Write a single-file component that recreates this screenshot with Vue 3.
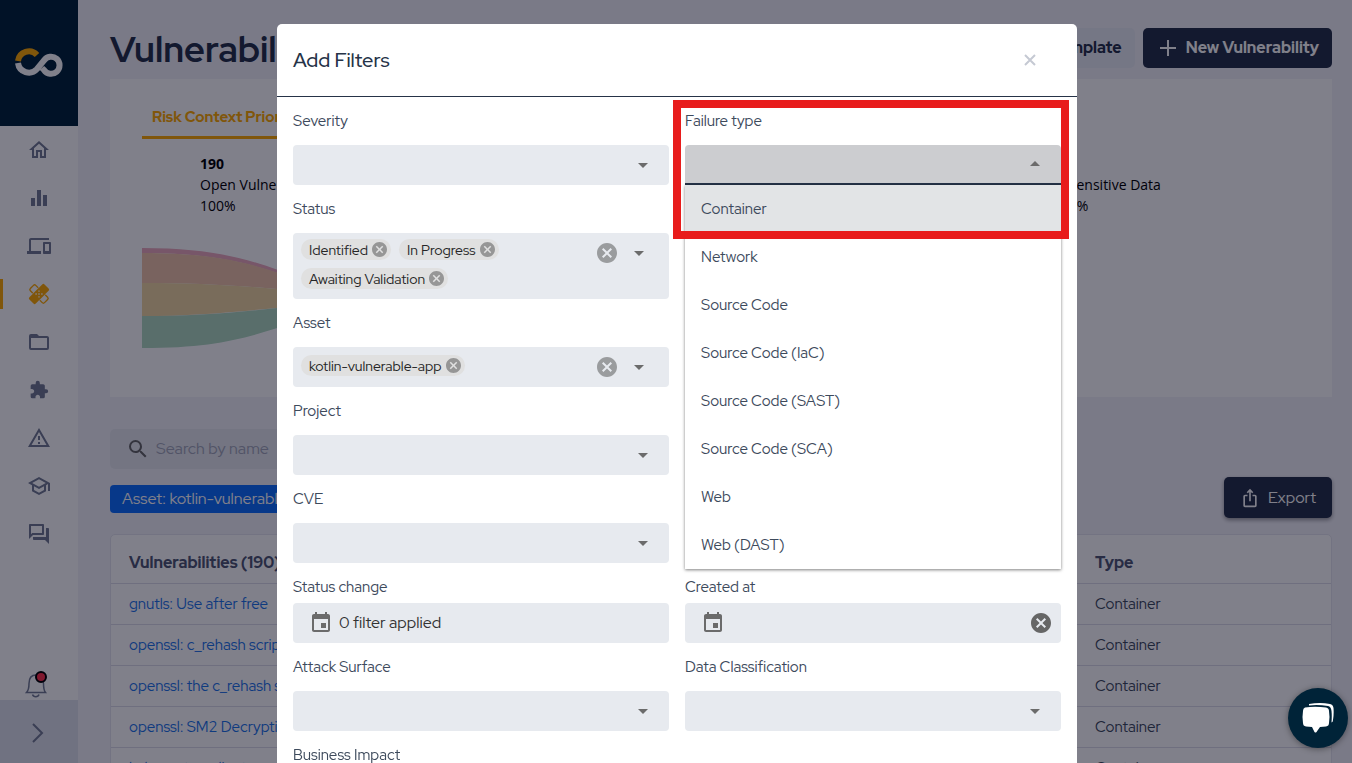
<script setup>
import { ref } from 'vue'

const nav = [
  { name: 'Home', d: 'M12 5.69L17 10.19V18H15V12H9V18H7V10.19L12 5.69M12 3L2 12H5V20H11V14H13V20H19V12H22L12 3Z' },
  { name: 'Dashboards', d: 'M4 12H8V20H4ZM10 4H14V20H10ZM16 9H20V20H16Z' },
  { name: 'Assets', d: 'M4 6h18V4H4c-1.1 0-2 .9-2 2v11H0v3h14v-3H4V6zm19 2h-6c-.55 0-1 .45-1 1v10c0 .55.45 1 1 1h6c.55 0 1-.45 1-1V9c0-.55-.45-1-1-1zm-1 9h-4v-7h4v7z' },
  { name: 'Vulnerabilities', bandage: true },
  { name: 'Projects', d: 'M20,18H4V8H20M20,6H12L10,4H4A2,2 0 0,0 2,6V18A2,2 0 0,0 4,20H20A2,2 0 0,0 22,18V8C22,6.89 21.1,6 20,6Z' },
  { name: 'Integrations', small: true, d: 'M20.5,11H19V7C19,5.89 18.1,5 17,5H13V3.5A2.5,2.5 0 0,0 10.5,1A2.5,2.5 0 0,0 8,3.5V5H4A2,2 0 0,0 2,7V10.8H3.5C5,10.8 6.2,12 6.2,13.5C6.2,15 5,16.2 3.5,16.2H2V20A2,2 0 0,0 4,22H7.8V20.5C7.8,19 9,17.8 10.5,17.8C12,17.8 13.2,19 13.2,20.5V22H17A2,2 0 0,0 19,20V16H20.5A2.5,2.5 0 0,0 23,13.5A2.5,2.5 0 0,0 20.5,11Z' },
  { name: 'Alerts', d: 'M12,2L1,21H23M12,6L19.53,19H4.47M11,10V14H13V10M11,16V18H13V16' },
  { name: 'Training', d: 'M12 3L1 9L5 11.18V17.18L12 21L19 17.18V11.18L21 10.09V17H23V9L12 3M18.82 9L12 12.72L5.18 9L12 5.28L18.82 9M17 16L12 18.72L7 16V12.27L12 15L17 12.27V16Z' },
  { name: 'Forum', d: 'M15 4v7H5.17L4 12.17V4h11m1-2H3c-.55 0-1 .45-1 1v14l4-4h10c.55 0 1-.45 1-1V3c0-.55-.45-1-1-1zm5 4h-2v9H6v2c0 .55.45 1 1 1h11l4 4V7c0-.55-.45-1-1-1z' },
]

const caret = 'M7,10L12,15L17,10H7Z'
const closeCircle = 'M12,2C6.47,2 2,6.47 2,12C2,17.53 6.47,22 12,22C17.53,22 22,17.53 22,12C22,6.47 17.53,2 12,2M15.59,7L12,10.59L8.41,7L7,8.41L10.59,12L7,15.59L8.41,17L12,13.41L15.59,17L17,15.59L13.41,12L17,8.41L15.59,7Z'
const calendar = 'M19 3h-1V1h-2v2H8V1H6v2H5c-1.11 0-2 .9-2 2v14c0 1.1.89 2 2 2h14c1.1 0 2-.9 2-2V5c0-1.1-.9-2-2-2zm0 16H5V8h14v11zM17 12h-5v5h5v-5z'

const fields = [
  { id: 'severity', label: 'Severity', kind: 'select' },
  { id: 'failure', label: 'Failure type', kind: 'menu' },
  { id: 'status', label: 'Status', kind: 'chips', chips: ['Identified', 'In Progress', 'Awaiting Validation'] },
  { id: 'asset', label: 'Asset', kind: 'chips', chips: ['kotlin-vulnerable-app'] },
  { id: 'project', label: 'Project', kind: 'select' },
  { id: 'cve', label: 'CVE', kind: 'select' },
  { id: 'changed', label: 'Status change', kind: 'date', value: '0 filter applied' },
  { id: 'created', label: 'Created at', kind: 'date', value: '', clear: true },
  { id: 'surface', label: 'Attack Surface', kind: 'select' },
  { id: 'classification', label: 'Data Classification', kind: 'select' },
  { id: 'impact', label: 'Business Impact', kind: 'select' },
]
const rowStart = ['status', 'asset', 'project', 'cve', 'changed']

const failureTypes = [
  'Container', 'Network', 'Source Code', 'Source Code (IaC)',
  'Source Code (SAST)', 'Source Code (SCA)', 'Web', 'Web (DAST)',
]

const rows = [
  'gnutls: Use after free',
  'openssl: c_rehash script',
  'openssl: the c_rehash script',
  'openssl: SM2 Decryption',
  'kubernetes: client',
]
const search = ref('')
</script>

<template>
  <div class="app">
    <aside class="sidebar">
      <a class="logo" href="#" aria-label="Conviso">
        <svg viewBox="1 0 50 32" width="50" height="32" fill="none" stroke-width="6">
          <path stroke="#ffab00" d="M5 14A11 11 0 0 1 24 8" />
          <path stroke="#fff" d="M5 16A11 11 0 0 0 24 22L31 13.5A8.5 8.5 0 1 1 31 23L29 21" />
        </svg>
      </a>
      <nav class="nav">
        <a v-for="n in nav" :key="n.name" href="#" class="nav-item" :class="{ active: n.bandage }" :aria-label="n.name">
          <svg v-if="n.bandage" viewBox="0 0 24 24" width="24" height="24">
            <rect x="2" y="8.2" width="20" height="7.6" rx="1.6" fill="none" stroke="currentColor" stroke-width="1.4" transform="rotate(45 12 12)" />
            <rect x="7" y="7" width="10" height="10" fill="#fff" transform="rotate(45 12 12)" />
            <rect x="1.3" y="7.5" width="6.500" height="9" rx="1.600" fill="currentColor" transform="rotate(-45 12 12)" />
            <rect x="16.200" y="7.500" width="6.500" height="9" rx="1.600" fill="currentColor" transform="rotate(-45 12 12)" />
            <rect x="7" y="7.500" width="10" height="9" fill="currentColor" transform="rotate(-45 12 12)" />
            <path fill="#fff" d="M11.300 8.400h1.400v1.400h-1.400zM11.300 14.200h1.400v1.400h-1.400zM8.400 11.300h1.400v1.400h-1.400zM14.200 11.300h1.400v1.400h-1.400zM11.300 11.300h1.400v1.400h-1.400z" />
          </svg>
          <svg v-else viewBox="0 0 24 24" :width="n.small ? 20 : 24" :height="n.small ? 20 : 24">
            <path fill="currentColor" fill-rule="evenodd" :d="n.d" />
          </svg>
        </a>
      </nav>
      <button class="bell" aria-label="Notifications">
        <svg viewBox="0 0 24 30" width="24" height="30" fill="none" stroke="currentColor" stroke-width="1.5">
          <path d="M1.500 23.500C4 21 4 18 4 14.500C4 9 6.500 6 11 6S18.500 9 18.500 14.500C18.500 18 18.500 21 20.500 23.500Z" />
          <path d="M7.500 25.500C8.500 28.500 13 28.500 14 25.500" />
          <circle cx="16" cy="8" r="5" fill="#ff3048" stroke="#000" stroke-width="2" />
        </svg>
      </button>
      <button class="expand" aria-label="Expand menu">
        <svg viewBox="0 0 12 20" width="12" height="20" fill="none" stroke="currentColor" stroke-width="2"><path d="M1 1L10 10L1 19" /></svg>
      </button>
    </aside>

    <main class="page">
      <header class="page-head">
        <h1>Vulnerabilities</h1>
        <button class="btn ghost">Template</button>
        <button class="btn dark">
          <svg viewBox="0 0 16 16" width="16" height="16" stroke="currentColor" stroke-width="2"><path d="M8 0V16M0 8H16" /></svg>
          New Vulnerability
        </button>
      </header>

      <section class="card">
        <a class="tab" href="#">Risk Context Prioritization</a>
        <div class="stats">
          <div><b>190</b><span>Open Vulnerabilities</span><span>100%</span></div>
          <div class="last"><b>0</b><span>Sensitive Data</span><span>0%</span></div>
        </div>
        <svg class="funnel" viewBox="0 0 300 102" width="300" height="102">
          <path fill="#ecaabd" d="M0 0C80 0 115 14 160 31L300 60V62L160 33C115 18 80 5 0 5Z" />
          <path fill="#f0c4a8" d="M0 5C80 5 115 17 160 33L300 58V64L135 41C90 37 50 35 0 35Z" />
          <path fill="#f0d6a0" d="M0 35C50 35 90 37 135 41L300 55L135 60C90 64 50 68 0 68Z" />
          <path fill="#b0dac0" d="M0 68C50 68 90 65 135 60L300 50V60L160 72C110 88 80 100 0 100Z" />
        </svg>
      </section>

      <label class="search">
        <svg viewBox="0 0 24 24" width="24" height="24"><path fill="currentColor" d="M9.500,3A6.500,6.500 0 0,1 16,9.500C16,11.110 15.410,12.590 14.440,13.730L14.710,14H15.500L20.500,19L19,20.500L14,15.500V14.710L13.730,14.440C12.590,15.410 11.110,16 9.500,16A6.500,6.500 0 0,1 3,9.500A6.500,6.500 0 0,1 9.500,3M9.500,5C7,5 5,7 5,9.500C5,12 7,14 9.500,14C12,14 14,12 14,9.500C14,7 12,5 9.500,5Z" /></svg>
        <input v-model="search" type="text" placeholder="Search by name" aria-label="Search by name">
      </label>

      <div class="tools">
        <span class="tag">Asset: kotlin-vulnerable-app</span>
        <button class="btn dark export">
          <svg viewBox="0 0 24 24" width="20" height="20"><path fill="currentColor" d="M16 5l-1.420 1.420-1.590-1.590V16h-1.980V4.830L9.420 6.420 8 5l4-4 4 4zm4 5v11c0 1.100-.9 2-2 2H6c-1.110 0-2-.9-2-2V10c0-1.110.89-2 2-2h3v2H6v11h12V10h-3V8h3c1.100 0 2 .89 2 2z" /></svg>
          Export
        </button>
      </div>

      <div class="table-wrap">
        <table>
          <thead><tr><th>Vulnerabilities (190)</th><th class="type">Type</th></tr></thead>
          <tbody>
            <tr v-for="r in rows" :key="r"><td><a href="#">{{ r }}</a></td><td>Container</td></tr>
          </tbody>
        </table>
      </div>
    </main>

    <div class="overlay">
      <section class="modal" role="dialog" aria-labelledby="dialog-title">
        <header class="modal-head">
          <h2 id="dialog-title">Add Filters</h2>
          <button class="close" aria-label="Close">
            <svg viewBox="0 0 12 12" width="12" height="12" stroke="currentColor" stroke-width="2"><path d="M1 1L11 11M11 1L1 11" /></svg>
          </button>
        </header>
        <form class="fields">
          <div v-for="f in fields" :key="f.id" class="field" :class="{ 'row-start': rowStart.includes(f.id), tight: f.kind === 'date' }">
            <label :for="f.id">{{ f.label }}</label>

            <div v-if="f.kind === 'select'" class="box">
              <select :id="f.id"><option value=""></option></select>
              <svg viewBox="0 0 24 24" width="24" height="24"><path :d="caret" /></svg>
            </div>

            <button v-else-if="f.kind === 'menu'" :id="f.id" type="button" class="box open" aria-haspopup="listbox" aria-expanded="true">
              <svg class="up" viewBox="0 0 24 24" width="24" height="24"><path :d="caret" /></svg>
            </button>

            <div v-else-if="f.kind === 'chips'" :id="f.id" class="box chip-box" :class="{ multi: f.chips.length > 1 }" role="group" :aria-label="f.label">
              <div class="chips">
                <span v-for="c in f.chips" :key="c" class="chip">
                  {{ c }}
                  <button type="button" :aria-label="'Remove ' + c"><svg viewBox="2 2 20 20" width="15" height="15"><path fill-rule="evenodd" :d="closeCircle" /></svg></button>
                </span>
              </div>
              <button type="button" class="clear" aria-label="Clear"><svg viewBox="0 0 24 24" width="24" height="24"><path fill-rule="evenodd" :d="closeCircle" /></svg></button>
              <svg viewBox="0 0 24 24" width="24" height="24"><path :d="caret" /></svg>
            </div>

            <div v-else class="box date-box">
              <svg viewBox="0 0 24 24" width="24" height="24"><path fill-rule="evenodd" :d="calendar" /></svg>
              <input :id="f.id" type="text" :value="f.value" readonly>
              <button v-if="f.clear" type="button" class="clear solid" aria-label="Clear"><svg viewBox="0 0 24 24" width="24" height="24"><path fill-rule="evenodd" :d="closeCircle" /></svg></button>
            </div>

            <template v-if="f.kind === 'menu'">
              <ul class="options" role="listbox" :aria-label="f.label">
                <li v-for="(t, i) in failureTypes" :key="t" role="option" :class="{ hover: i === 0 }">{{ t }}</li>
              </ul>
              <div class="highlight"></div>
            </template>
          </div>
        </form>
      </section>
    </div>

    <button class="chat" aria-label="Open chat">
      <svg viewBox="0 0 32 30" width="32" height="30" fill="#fff">
        <path d="M3 4.500Q13 3 24 4.500Q27 5 27 8Q28 14 27 20Q27 23 24 23.500L18 24L14.500 29Q13.500 30 12.500 29L10 24L4 23.500Q1 23 1 20Q0 14 1 8Q1 5 3 4.500Z" />
        <path d="M7 1Q18 -1 28 1Q31 1.500 31.500 5Q32 11 31 17Q31 19 29.500 19.500Q30 13 29.500 8Q29 3.500 26 3Q16 1.500 7 2.500Z" />
      </svg>
    </button>
  </div>
</template>

<style>
body { overflow: hidden; }
</style>

<style scoped>
.app, .app * { box-sizing: border-box; }
.app {
  display: flex; height: 100vh; overflow: hidden; background: #f3f3f9;
  font-family: "Red Hat Display", Lato, sans-serif; font-size: 15px; line-height: 24px; color: #3d4a5c;
}
button, input, select { font: inherit; color: inherit; border: 0; background: none; padding: 0; margin: 0; outline: 0; }
a { color: inherit; text-decoration: none; }
h1, h2, ul { margin: 0; padding: 0; }
svg { display: block; flex: none; }

.sidebar { width: 78px; flex: none; display: flex; flex-direction: column; background: #fff; color: #727b92; }
.logo { height: 126px; background: #002238; display: flex; align-items: center; justify-content: center; }
.nav { flex: 1; }
.nav-item { height: 48px; padding-right: 1px; display: flex; align-items: center; justify-content: center; }
.active { color: #ffab00; background: linear-gradient(#ffab00, #ffab00) 0 center / 3px 30px no-repeat; }
.bell { height: 32px; padding-left: 25px; }
.expand { height: 63px; padding: 2px 2px 0 0; background: #dee2ec; display: flex; align-items: center; justify-content: center; }

.page { flex: 1; min-width: 0; padding: 28px 20px 0 32px; }
.page-head { display: flex; gap: 8px; height: 51px; align-items: flex-start; }
h1 { flex: 1; font-size: 36px; line-height: 42px; font-weight: 700; color: #253048; }
.btn { height: 40px; border-radius: 5px; font-size: 16px; font-weight: 800; padding: 0 13px; }
.ghost { background: #e9ecf4; color: #253048; }
.dark { background: #253048; color: #fff; display: flex; align-items: center; gap: 10px; padding: 0 13px 0 17px; }
.export { height: 41px; font-weight: 400; gap: 8px; padding: 0 16px; box-shadow: 0 2px 4px rgba(0, 0, 0, .4); }
.card { height: 318px; background: #fff; padding: 24px 32px; }
.tab { display: inline-block; height: 36px; padding: 2px 10px 0; border-bottom: 3px solid #ffab00; color: #ffab00; font-weight: 800; }
.stats { display: grid; grid-template-columns: repeat(5, 1fr); padding: 14px 14px 0 58px; color: #000; font: 14px/21px "Open Sans", "Noto Sans", sans-serif; }
.stats div { display: flex; flex-direction: column; }
.last { grid-column: 5; }
.funnel { margin-top: 32px; }
.search { display: flex; align-items: center; gap: 6px; width: 400px; height: 40px; margin-top: 32px; padding-left: 16px; border-radius: 5px; background: #e6e9ef; color: #666; }
.search input { flex: 1; font-size: 16px; }
.search input::placeholder { color: #a3a7b8; opacity: 1; }
.tools { display: flex; justify-content: space-between; height: 65px; padding-top: 8px; }
.tag { height: 28px; margin-top: 8px; padding: 2px 12px; border-radius: 4px; background: #0d6efd; color: #fff; font-size: 16px; }
.table-wrap { border: 1px solid #e4e5ee; border-radius: 5px; background: #fff; }
table { width: 100%; border-collapse: collapse; table-layout: fixed; }
th, td { text-align: left; padding: 0 18px; height: 41px; border-bottom: 1px solid #dcdde8; }
th { height: 48px; padding-top: 8px; font-size: 16px; font-weight: 800; color: #4e5672; }
td a { color: #1d74e8; }
.type { width: 254px; }

.overlay { position: fixed; inset: 0; display: flex; justify-content: center; padding: 24px 0 0 2px; background: rgba(2, 2, 22, .5); }
.modal { width: 800px; max-width: 100%; background: #fff; border-radius: 5px 5px 0 0; }
.modal-head { height: 73px; padding: 0 41px 0 16px; display: flex; align-items: center; justify-content: space-between; border-bottom: 1px solid #263348; }
h2 { font-size: 20px; font-weight: 500; color: #263348; }
.close { color: #c5c9d3; }
.fields { display: grid; grid-template-columns: 1fr 1fr; gap: 12px 16px; padding: 12px 16px; }
.field { display: flex; flex-direction: column; gap: 12px; position: relative; }
.row-start { grid-column: 1; }
.tight { gap: 4px; }
.box { position: relative; display: flex; align-items: center; width: 100%; min-height: 40px; padding: 0 14px 0 8px; border-radius: 4px; background: #e7eaef; }
.box select { flex: 1; height: 40px; appearance: none; }
.box svg { fill: #6b6b6b; }
.open { justify-content: flex-end; background: #cccdd0; border-bottom: 2px solid #263348; border-radius: 4px 4px 0 0; }
.up { transform: rotate(180deg); }
.chip-box { align-items: flex-start; padding: 8px 18px 8px 8px; }
.chips { flex: 1; display: flex; flex-wrap: wrap; gap: 8px; padding-right: 60px; }
.multi .chips { margin-top: -2px; padding-bottom: 2px; }
.chip { display: flex; align-items: center; gap: 4px; height: 21px; padding: 0 4px 0 8px; border-radius: 11px; background: #e0e0e0; color: #262626; font-size: 14px; line-height: 20px; white-space: nowrap; }
.box .chip svg { fill: #969696; }
.clear { margin-right: 8px; }
.box .clear svg { fill: #9a9c9e; }
.clear.solid { margin: 0; }
.box .clear.solid svg { fill: #666; }
.date-box { padding: 0 8px 0 16px; gap: 6px; color: #333; font-size: 16px; }
.date-box input { flex: 1; min-width: 0; }
.options { position: absolute; z-index: 2; top: 76px; left: 0; right: 0; list-style: none; background: #fff; box-shadow: 0 1px 3px rgba(0, 0, 0, .5); }
.options li { height: 48px; padding: 12px 16px; }
.options .hover { background: #e2e4e6; }
.highlight { position: absolute; z-index: 3; top: -9px; left: -12px; right: -8px; bottom: -54px; border: 8px solid #e81c1c; }

.chat { position: fixed; right: 4px; bottom: 15px; width: 60px; height: 60px; border-radius: 50%; background: #002338; box-shadow: 0 1px 6px rgba(0, 0, 0, .4); display: flex; align-items: center; justify-content: center; }
</style>
